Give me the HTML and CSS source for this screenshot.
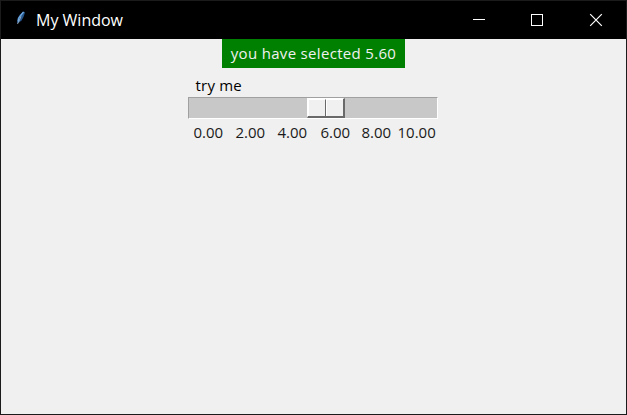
FILE: index.html
```html
<!DOCTYPE html>
<html lang="en">
<head>
<meta charset="utf-8">
<title>My Window</title>
<link rel="stylesheet" href="styles.css">
</head>
<body>
<div class="window">
  <header class="titlebar">
    <svg class="feather" width="16" height="16" viewBox="0 0 16 16"><path d="M4 13.500 4.500 8.500 7 4.500 10.500 1.500 12 2.500 10.500 7 8.500 10.500 6 12.500Z" fill="#24568c"/><path d="M5 11.500 6 7.500 10.500 2" stroke="#70a9df" stroke-width="1.300" fill="none"/><path d="M4.500 14 6.500 10 8 6.500" stroke="#c1ccd6" stroke-width=".7" fill="none"/></svg>
    <h1 class="title">My Window</h1>
    <div class="controls">
      <svg width="58" height="38" viewBox="0 0 58 38"><path d="M15 18.500H27" stroke="#fff"/></svg>
      <svg width="58" height="38" viewBox="0 0 58 38"><rect x="15.500" y="13.500" width="11" height="11" stroke="#fff" fill="none"/></svg>
      <svg width="52" height="38" viewBox="0 0 52 38"><path d="M16.200 13.200 27.800 24.800M27.800 13.200 16.200 24.800" stroke="#fff" stroke-width="1.200"/></svg>
    </div>
  </header>
  <main class="content">
    <div class="selected">you have selected 5.60</div>
    <div class="scale">
      <div class="label">try me</div>
      <div class="trough"><div class="thumb"><i></i><i></i></div></div>
      <div class="ticks"><span>0.00</span><span>2.00</span><span>4.00</span><span>6.00</span><span>8.00</span><span>10.00</span></div>
    </div>
  </main>
</div>
</body>
</html>
```
FILE: styles.css
```css
* { box-sizing: border-box; }
body { margin: 0; font: 15px/20px "Open Sans", "Noto Sans", sans-serif; color: #000; }
.window { width: 627px; height: 415px; border: 1px solid #1b1b1b; background: #f0f0f0; }
.titlebar { height: 38px; background: #000; display: flex; align-items: center; color: #fff; padding-left: 12px; }
.feather { margin-top: -4px; }
.title { margin: -1px 0 0 7px; font-size: 16px; font-weight: 400; flex: 1; }
.controls { display: flex; }
.content { display: flex; flex-direction: column; align-items: center; }
.selected { width: 183px; height: 29px; background: #008000; color: #f0f0f0; text-align: center; line-height: 29px; letter-spacing: .32px; }
.scale { width: 250px; margin: 7px 2px 0 0; }
.label { padding-left: 8px; height: 22px; line-height: 21px; letter-spacing: .2px; }
.trough { height: 22px; background: #c8c8c8; border: 1px solid; border-color: #a0a0a0 #fff #fff #a0a0a0; padding-left: 118px; }
.thumb { display: flex; width: 38px; height: 20px; border: solid; border-width: 1px 2px 2px 1px; border-color: #fff #696969 #696969 #fff; }
.thumb i { flex: 1; background: #f0f0f0; border: solid #fff; border-width: 1px 0 0 1px; }
.thumb i:first-child { flex: 0 0 18px; border-right: 1px solid #696969; }
.ticks { display: grid; grid-template-columns: 42px 42px 43px 41px 36px 40px; padding: 3px 0 0 6px; color: #1a1a1a; }
```
